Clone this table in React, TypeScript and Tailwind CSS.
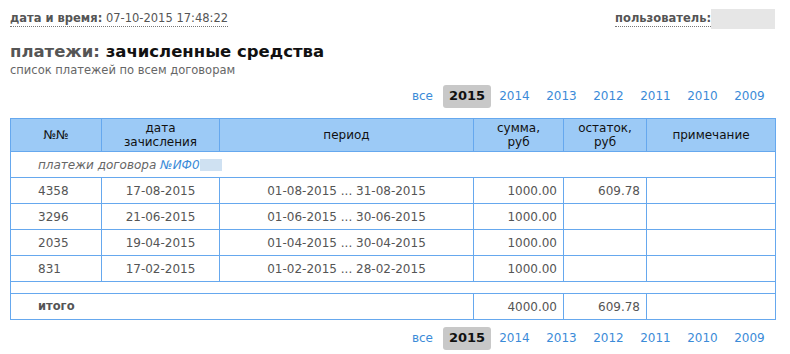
const YEARS = ['2015', '2014', '2013', '2012', '2011', '2010', '2009'];

const ROWS = [
  { num: '4358', date: '17-08-2015', period: '01-08-2015 ... 31-08-2015', sum: '1000.00', rest: '609.78' },
  { num: '3296', date: '21-06-2015', period: '01-06-2015 ... 30-06-2015', sum: '1000.00', rest: '' },
  { num: '2035', date: '19-04-2015', period: '01-04-2015 ... 30-04-2015', sum: '1000.00', rest: '' },
  { num: '831', date: '17-02-2015', period: '01-02-2015 ... 28-02-2015', sum: '1000.00', rest: '' },
];

function YearNav() {
  return (
    <div className="flex justify-end items-center h-[24px] pr-[2px]">
      <a className="px-[10px] text-[#3b8bd8] text-[12px]">все</a>
      {YEARS.map((y) =>
        y === '2015' ? (
          <span
            key={y}
            className="h-[23px] w-[48px] flex items-center justify-center rounded-[3px] bg-[#c8c8c8] text-[13px] font-bold text-[#111]"
          >
            {y}
          </span>
        ) : (
          <a key={y} className="w-[47px] text-center text-[#3b8bd8] text-[12px]">
            {y}
          </a>
        )
      )}
    </div>
  );
}

const cell = 'border border-[#66a8ee] h-[26px] px-[8px] py-0';
const head = 'border border-[#66a8ee] text-center font-normal leading-[14px]';

export default function App() {
  return (
    <div
      className="w-[790px] h-[354px] bg-white text-[#555] text-[12px] overflow-hidden"
      style={{ fontFamily: '"DejaVu Sans", Verdana, sans-serif' }}
    >
      <div className="ml-[10px] w-[765px]">
        {/* header line */}
        <div className="flex justify-between items-start pt-[9px] h-[31px] text-[11.5px]">
          <div className="border-b border-dotted border-[#777] leading-[15px] mt-[2px]">
            <b>дата и время:</b> 07-10-2015 17:48:22
          </div>
          <div className="flex items-start">
            <span className="border-b border-dotted border-[#777] leading-[15px] mt-[2px] font-bold">
              пользователь:
            </span>
            <span className="w-[64px] h-[20px] bg-[#e6e6e6]" />
          </div>
        </div>

        {/* title */}
        <div className="mt-[10px] text-[16.5px] font-bold leading-[22px]">
          <span className="text-[#555]">платежи:</span>{' '}
          <span className="text-[#111]">зачисленные средства</span>
        </div>
        <div className="text-[11.5px] leading-[14px] text-[#666]">список платежей по всем договорам</div>

        <div className="mt-[7px]">
          <YearNav />
        </div>

        {/* table */}
        <table className="mt-[10px] w-[765px] border-collapse table-fixed">
          <colgroup>
            <col className="w-[91px]" />
            <col className="w-[118px]" />
            <col className="w-[254px]" />
            <col className="w-[90px]" />
            <col className="w-[83px]" />
            <col className="w-[129px]" />
          </colgroup>
          <thead>
            <tr className="bg-[#9ccaf6] text-[#111]">
              <th className={`${head} h-[33px]`}>№№</th>
              <th className={head}>
                дата
                <br />
                зачисления
              </th>
              <th className={head}>период</th>
              <th className={head}>
                сумма,
                <br />
                руб
              </th>
              <th className={head}>
                остаток,
                <br />
                руб
              </th>
              <th className={head}>примечание</th>
            </tr>
          </thead>
          <tbody>
            <tr>
              <td colSpan={6} className={`${cell} pl-[27px] italic text-[#666]`}>
                платежи договора <span className="text-[#3b8bd8]">№ИФ0</span>
                <span className="inline-block align-middle w-[22px] h-[12px] bg-[#cfe1f2]" />
              </td>
            </tr>
            {ROWS.map((r) => (
              <tr key={r.num}>
                <td className={`${cell} pl-[27px]`}>{r.num}</td>
                <td className={`${cell} text-center`}>{r.date}</td>
                <td className={`${cell} text-center`}>{r.period}</td>
                <td className={`${cell} text-right pr-[6px]`}>{r.sum}</td>
                <td className={`${cell} text-right pr-[6px]`}>{r.rest}</td>
                <td className={cell}></td>
              </tr>
            ))}
            <tr>
              <td colSpan={6} className="border border-[#66a8ee] h-[12px] p-0"></td>
            </tr>
            <tr>
              <td colSpan={3} className={`${cell} pl-[27px] font-bold text-[11.5px]`}>итого</td>
              <td className={`${cell} text-right pr-[6px]`}>4000.00</td>
              <td className={`${cell} text-right pr-[6px]`}>609.78</td>
              <td className={cell}></td>
            </tr>
          </tbody>
        </table>

        <div className="mt-[6px]">
          <YearNav />
        </div>
      </div>
    </div>
  );
}
